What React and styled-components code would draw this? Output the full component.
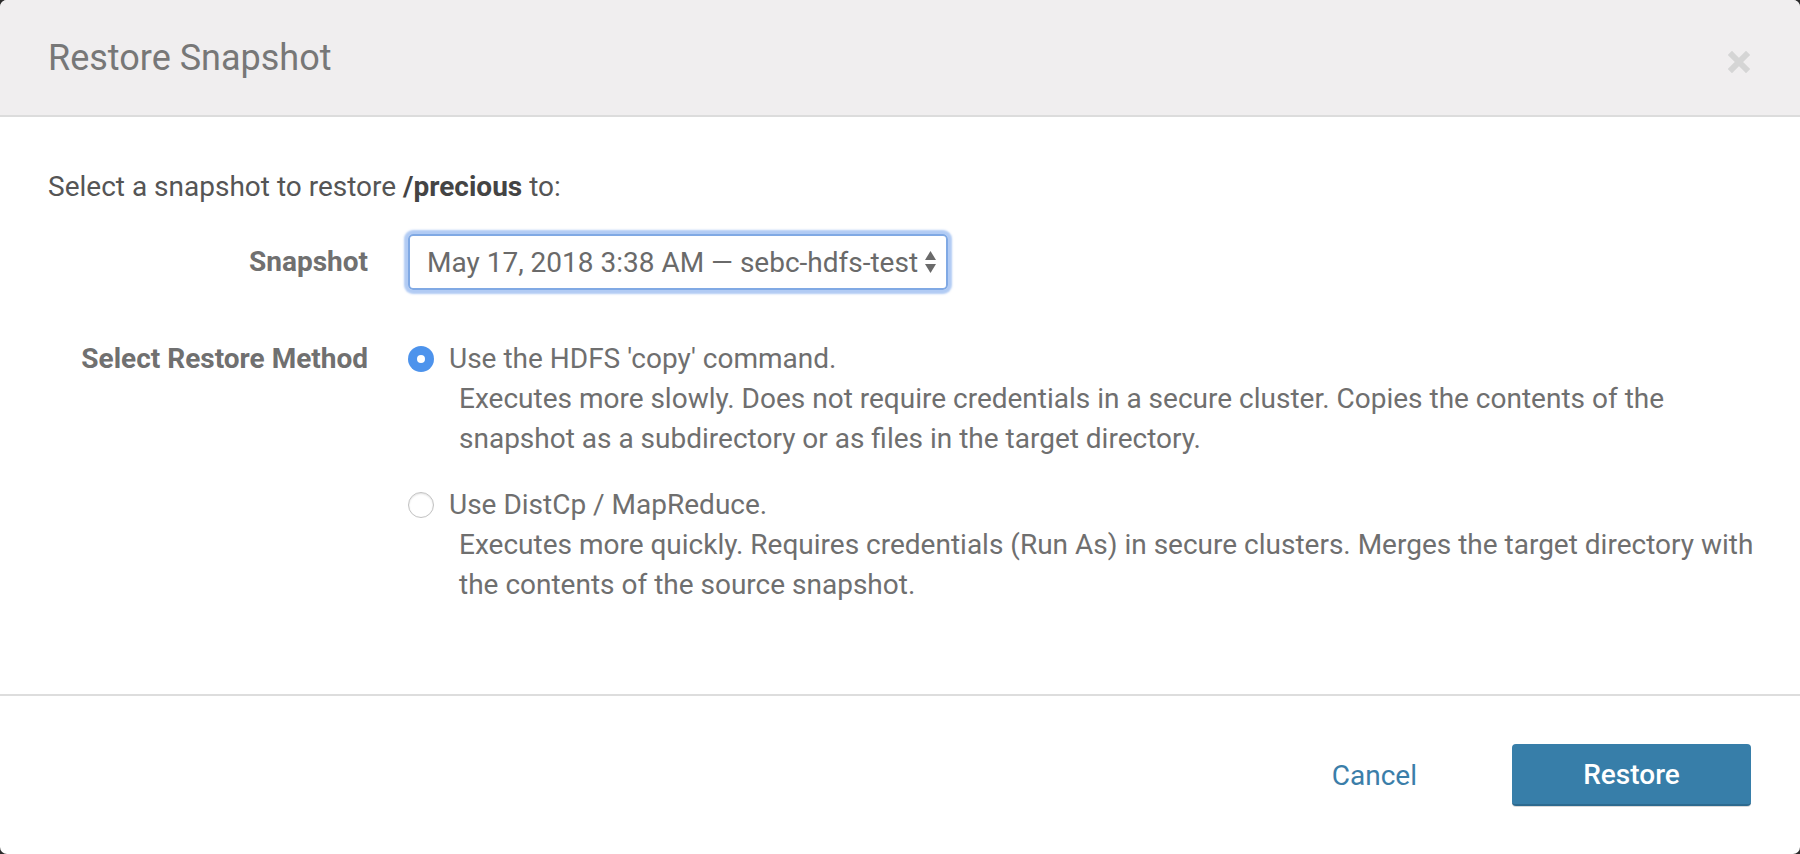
import React from "react";
import styled, { createGlobalStyle } from "styled-components";

const GlobalStyle = createGlobalStyle`
    html, body {
        margin: 0;
        background: #2b2b2b;
    }
    body {
        font-family: Roboto, "Liberation Sans", sans-serif;
    }
`

const CloseIcon = () => (
    <svg width="22" height="22" viewBox="0 0 22 22">
        <path d="M4 4 L18 18 M18 4 L4 18" stroke="#d5d5d5" strokeWidth="6" strokeLinecap="square" />
    </svg>
)

const SortArrows = () => (
    <svg width="13" height="26" viewBox="0 0 13 26">
        <path d="M6.5 2 L12 11 L1 11 Z" fill="#6a6a6a" />
        <path d="M6.5 24 L12 15 L1 15 Z" fill="#6a6a6a" />
    </svg>
)

const App = () => {
    return (
        <>
            <GlobalStyle />
            <Dialog>
                <Header>
                    <Title>Restore Snapshot</Title>
                    <CloseButton aria-label="Close"><CloseIcon /></CloseButton>
                </Header>
                <Body>
                    <Intro>Select a snapshot to restore <strong>/precious</strong> to:</Intro>
                    <FormRow $top={27} $align="center">
                        <Label>Snapshot</Label>
                        <SelectBox>
                            <span>May 17, 2018 3:38 AM — sebc-hdfs-test</span>
                            <SortArrows />
                        </SelectBox>
                    </FormRow>
                    <FormRow $top={49} $align="start">
                        <Label>Select Restore Method</Label>
                        <Options>
                            <Option>
                                <OptionHead>
                                    <Radio $checked />
                                    Use the HDFS 'copy' command.
                                </OptionHead>
                                <Description>
                                    Executes more slowly. Does not require credentials in a secure cluster. Copies the contents of the snapshot as a subdirectory or as files in the target directory.
                                </Description>
                            </Option>
                            <Option>
                                <OptionHead>
                                    <Radio />
                                    Use DistCp / MapReduce.
                                </OptionHead>
                                <Description>
                                    Executes more quickly. Requires credentials (Run As) in secure clusters. Merges the target directory with the contents of the source snapshot.
                                </Description>
                            </Option>
                        </Options>
                    </FormRow>
                </Body>
                <Footer>
                    <LinkButton>Cancel</LinkButton>
                    <PrimaryButton>Restore</PrimaryButton>
                </Footer>
            </Dialog>
        </>
    )
}

export default App

const Dialog = styled.div`
    height: 854px;
    background: #ffffff;
    border-radius: 7px;
    overflow: hidden;
    display: flex;
    flex-direction: column;
`

const Header = styled.header`
    height: 117px;
    flex-shrink: 0;
    box-sizing: border-box;
    background: #f0eeef;
    border-bottom: 2px solid #dcdcdc;
    display: flex;
    align-items: center;
    justify-content: space-between;
    padding: 0 50px 0 48px;
`

const Title = styled.h4`
    margin: 0;
    font-size: 36px;
    font-weight: 400;
    color: #777777;
`

const CloseButton = styled.button`
    border: 0;
    background: none;
    padding: 0;
    margin-top: 8px;
    display: flex;
`

const Body = styled.main`
    flex: 1;
    padding: 50px 34px 0 48px;
    color: #666666;
    font-size: 28px;
`

const Intro = styled.p`
    margin: 0;
    line-height: 40px;
    color: #555555;

    strong {
        color: #444444;
        font-weight: 700;
    }
`

const FormRow = styled.div`
    display: grid;
    grid-template-columns: 320px 1fr;
    column-gap: 40px;
    align-items: ${({ $align }) => $align};
    margin-top: ${({ $top }) => $top}px;
`

const Label = styled.label`
    text-align: right;
    font-weight: 700;
    color: #707070;
    line-height: 40px;
`

const SelectBox = styled.div`
    width: 540px;
    height: 56px;
    box-sizing: border-box;
    display: flex;
    align-items: center;
    justify-content: space-between;
    padding: 0 9px 0 17px;
    border: 2px solid #80a9e4;
    border-radius: 5px;
    box-shadow: 0 0 2px 4px rgba(125, 168, 236, 0.6);
    color: #6a6a6a;
    font-size: 28px;
`

const Options = styled.div`
    display: flex;
    flex-direction: column;
    gap: 26px;
`

const Option = styled.div`
    display: flex;
    flex-direction: column;
`

const OptionHead = styled.div`
    display: flex;
    align-items: center;
    gap: 15px;
    line-height: 40px;
    color: #6f6f6f;
`

const Radio = styled.span`
    width: 26px;
    height: 26px;
    box-sizing: border-box;
    border-radius: 50%;
    flex-shrink: 0;
    position: relative;
    background: ${({ $checked }) => ($checked ? "#4d93ec" : "#ffffff")};
    border: ${({ $checked }) => ($checked ? "none" : "1.5px solid #c2c2c2")};
    box-shadow: ${({ $checked }) => ($checked ? "none" : "inset 0 1px 2px rgba(0,0,0,0.12)")};

    &::after {
        content: "";
        display: ${({ $checked }) => ($checked ? "block" : "none")};
        position: absolute;
        left: 50%;
        top: 50%;
        width: 8px;
        height: 8px;
        margin: -4px 0 0 -4px;
        border-radius: 50%;
        background: #ffffff;
    }
`

const Description = styled.p`
    margin: 0 0 0 51px;
    line-height: 40px;
    color: #6f6f6f;
`

const Footer = styled.footer`
    height: 160px;
    flex-shrink: 0;
    box-sizing: border-box;
    border-top: 2px solid #dddddd;
    display: flex;
    align-items: center;
    justify-content: flex-end;
    gap: 95px;
    padding: 0 49px 0 0;
`

const LinkButton = styled.button`
    border: 0;
    background: none;
    padding: 0;
    font-family: inherit;
    font-size: 28px;
    color: #3b7ea9;
`

const PrimaryButton = styled.button`
    width: 239px;
    height: 62px;
    border: 0;
    border-radius: 4px;
    background: #377ea9;
    border-bottom: 2px solid #2d6a8f;
    box-shadow: 0 1px 0 rgba(0, 0, 0, 0.15);
    color: #ffffff;
    font-family: inherit;
    font-size: 28px;
    font-weight: 500;
`
